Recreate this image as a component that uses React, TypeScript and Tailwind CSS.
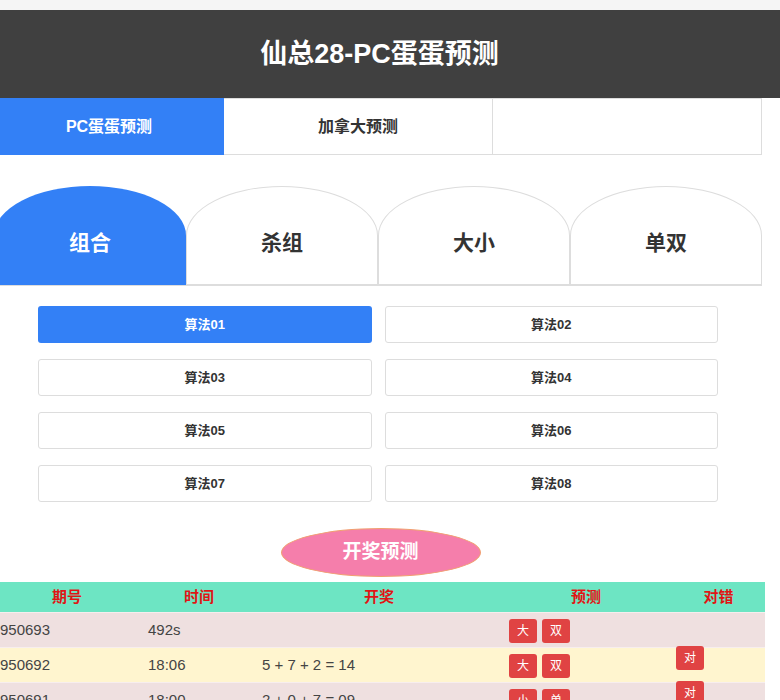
import React from 'react';

const navTabs = [
  { label: 'PC蛋蛋预测', width: 'w-[230px]', active: true },
  { label: '加拿大预测', width: 'w-[269px]', active: false },
  { label: '', width: 'w-[269px]', active: false },
];

const playTabs = ['组合', '杀组', '大小', '单双'];

const algos = ['算法01', '算法02', '算法03', '算法04', '算法05', '算法06', '算法07', '算法08'];

interface Row {
  issue: string;
  time: string;
  result: string;
  predict: string[];
  hit: string;
  bg: string;
}

const rows: Row[] = [
  { issue: '950693', time: '492s', result: '', predict: ['大', '双'], hit: '', bg: 'bg-[#efe0e0]' },
  { issue: '950692', time: '18:06', result: '5 + 7 + 2 = 14', predict: ['大', '双'], hit: '对', bg: 'bg-[#fff5cf]' },
  { issue: '950691', time: '18:00', result: '2 + 0 + 7 = 09', predict: ['小', '单'], hit: '对', bg: 'bg-[#efe0e0]' },
];

const Badge: React.FC<{ text: string }> = ({ text }) => (
  <span className="inline-flex h-[24px] w-[28px] items-center justify-center rounded-[3px] bg-[#e04343] text-[12px] text-white">
    {text}
  </span>
);

export default function App() {
  return (
    <div className="min-h-[700px] w-[780px] overflow-hidden bg-white font-['Liberation_Sans','Noto_Sans_CJK_SC',sans-serif]">
      <div className="h-[10px] bg-[#f5f5f5]" />
      <div className="bg-[#404040]">
        <header className="ml-[-6px] flex h-[88px] w-[771px] items-center justify-center text-[27px] font-bold text-white">
          仙总28-PC蛋蛋预测
        </header>
      </div>

      <div className="ml-[-6px] w-[771px]">
        <nav className="flex h-[57px]">
          {navTabs.map((t, i) => (
            <div
              key={i}
              className={`${t.width} flex items-center justify-center text-[16px] font-bold ${
                t.active ? 'bg-[#3380f6] text-white' : 'border border-l-0 border-[#ddd] bg-white text-[#333]'
              }`}
            >
              {t.label}
            </div>
          ))}
        </nav>

        <div className="mt-[31px] flex w-[768px]">
          {playTabs.map((t, i) => (
            <div
              key={t}
              className={`flex h-[99px] w-[192px] items-center justify-center rounded-t-[50%] pt-[14px] text-[21px] font-bold ${
                i === 0 ? 'bg-[#3380f6] text-white' : 'border border-[#ddd] bg-white text-[#333]'
              }`}
            >
              {t}
            </div>
          ))}
        </div>
        <div className="h-px w-[768px] bg-[#ddd]" />

        <div className="mt-[20px] grid w-[768px] grid-cols-2 gap-x-[13px] gap-y-[16px] px-[44px]">
          {algos.map((a, i) => (
            <div
              key={a}
              className={`flex h-[37px] items-center justify-center rounded-[3px] text-[13px] font-bold ${
                i === 0 ? 'bg-[#3380f6] text-white' : 'border border-[#ddd] bg-white text-[#333]'
              }`}
            >
              {a}
            </div>
          ))}
        </div>

        <div className="mt-[26px] flex w-[768px] justify-center">
          <div className="ml-[5px] flex h-[49px] w-[200px] items-center justify-center rounded-[50%] border border-[#f0a070] bg-[#f57eab] text-[19px] font-bold text-white">
            开奖预测
          </div>
        </div>

        <div className="mt-[5px]">
          <div className="grid h-[30px] grid-cols-[146px_118px_242px_172px_93px] items-center bg-[#6de5c3] text-center text-[15px] font-bold text-[#e01515]">
            <div>期号</div>
            <div>时间</div>
            <div>开奖</div>
            <div>预测</div>
            <div>对错</div>
          </div>
          {rows.map((r) => (
            <div
              key={r.issue}
              className={`grid h-[35px] grid-cols-[146px_118px_242px_172px_93px] border-t border-[#f7eeee] text-[15px] text-[#444] ${r.bg}`}
            >
              <div className="flex items-center pl-[6px]">{r.issue}</div>
              <div className="flex items-center pl-[8px]">{r.time}</div>
              <div className="flex items-center pl-[4px]">{r.result}</div>
              <div className="flex items-end gap-[5px] pb-[4px] pl-[9px]">
                {r.predict.map((p, i) => (
                  <Badge key={i} text={p} />
                ))}
              </div>
              <div className="-mt-[2px] pl-[4px]">{r.hit && <Badge text={r.hit} />}</div>
            </div>
          ))}
        </div>
      </div>
    </div>
  );
}
